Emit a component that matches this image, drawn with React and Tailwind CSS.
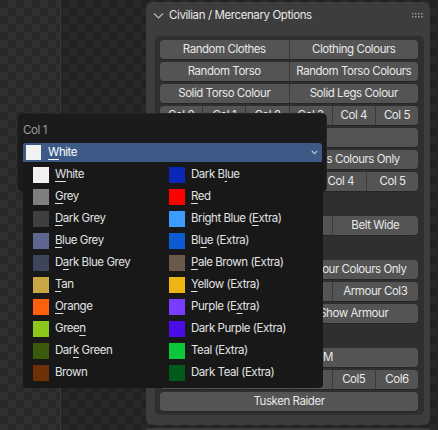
import React from "react";

const F = "font-[Inter,'Noto_Sans',sans-serif]";

const Btn = ({ children }) => (
  <div className="flex-1 min-w-0 flex items-center justify-center bg-[#545454] text-[#e8e8e8] text-[11.5px] tracking-[-0.45px] whitespace-nowrap overflow-hidden">
    {children}
  </div>
);

const Row = ({ items }) => (
  <div className="flex h-[19px] gap-px rounded-[4px] overflow-hidden bg-[#3a3a3a] shadow-[0_1px_0_#262626]">
    {items.map((t, i) => (
      <Btn key={i}>{t}</Btn>
    ))}
  </div>
);

const Label = ({ children }) => (
  <div className="h-[19px] flex items-center text-[11.5px] tracking-[-0.45px] text-[#d0d0d0] pl-1">{children}</div>
);

const left = [
  ["White", "#f2f2f2", 0],
  ["Grey", "#7f7f7f", 0],
  ["Dark Grey", "#3f3f3f", 0],
  ["Blue Grey", "#5e6690", 0],
  ["Dark Blue Grey", "#3c455a", 1],
  ["Tan", "#c9a544", 0],
  ["Orange", "#ff5e0a", 0],
  ["Green", "#8cc81c", 4],
  ["Dark Green", "#3b5a0b", 3],
  ["Brown", "#6e3006", -1],
];
const right = [
  ["Dark Blue", "#0b27b5", 6],
  ["Red", "#ff0000", 0],
  ["Bright Blue (Extra)", "#3d9cff", 13],
  ["Blue (Extra)", "#0b5bd3", 2],
  ["Pale Brown (Extra)", "#6b5a4b", 0],
  ["Yellow (Extra)", "#efb414", 0],
  ["Purple (Extra)", "#7a3dff", 9],
  ["Dark Purple (Extra)", "#4a0be6", -1],
  ["Teal (Extra)", "#0bc73c", -1],
  ["Dark Teal (Extra)", "#015a1a", -1],
];

const Mn = ({ text, idx }) => {
  if (idx < 0) return <span>{text}</span>;
  return (
    <span>
      {text.slice(0, idx)}
      <span className="underline decoration-1 underline-offset-[3px]">{text[idx]}</span>
      {text.slice(idx + 1)}
    </span>
  );
};

const Item = ({ it }) => (
  <div className="h-[22px] flex items-center pl-[10px] gap-[6px]">
    <div className="w-[16px] h-[16px] shrink-0" style={{ backgroundColor: it[1] }} />
    <div className="text-[11.5px] tracking-[-0.45px] text-[#e2e2e2] whitespace-nowrap">
      <Mn text={it[0]} idx={it[2]} />
    </div>
  </div>
);

export default function App() {
  const checkerL =
    "bg-[repeating-conic-gradient(#303030_0_25%,#292929_0_50%)] bg-size-[16px_16px]";
  const checkerR =
    "bg-[repeating-conic-gradient(#282828_0_25%,#212121_0_50%)] bg-size-[16px_16px]";
  return (
    <div className={`relative w-[438px] h-[430px] overflow-hidden flex ${F}`}>
      <div className={`w-[60px] h-full ${checkerL}`} />
      <div className="w-px h-full bg-[#3b3b3b]" />
      <div className={`flex-1 h-full ${checkerR} pl-[85px] pr-[8px] pt-[2px] flex flex-col`}>
        <div className="bg-[#3d3d3d] rounded-[6px] pb-[10px]">
          <div className="h-[27px] flex items-center pl-[7px] pr-[7px]">
            <svg width="11" height="8" viewBox="0 0 11 8" className="mr-[5px]">
              <path d="M1 1.5 L5.5 6 L10 1.5" fill="none" stroke="#b8b8b8" strokeWidth="1.2" />
            </svg>
            <div className="flex-1 text-[11.5px] tracking-[-0.4px] text-[#e8e8e8]">Civilian / Mercenary Options</div>
            <svg width="11" height="6" viewBox="0 0 11 6">
              {[0, 1].map((r) =>
                [0, 1, 2, 3].map((c) => (
                  <rect key={`${r}${c}`} x={c * 3} y={r * 3} width="1.5" height="1.5" fill="#9a9a9a" />
                ))
              )}
            </svg>
          </div>
          <div className="mt-[7px] ml-[9px] mr-[6px] bg-[#2f2f2f] rounded-[5px] pl-[5px] pr-[6px] pt-[4px] pb-[4px] flex flex-col gap-[3px]">
            <Row items={["Random Clothes", "Clothing Colours"]} />
            <Row items={["Random Torso", "Random Torso Colours"]} />
            <Row items={["Solid Torso Colour", "Solid Legs Colour"]} />
            <Row items={["Col 0", "Col 1", "Col 2", "Col 3", "Col 4", "Col 5"]} />
            <Row items={["Random Legs"]} />
            <Row items={["Random Legs Colours", "Legs Colours Only"]} />
            <Row items={["Col 1", "Col 2", "Col 3", "Col 4", "Col 5"]} />
            <Label>Belt</Label>
            <Row items={["Belt Thin", "Belt Medium", "Belt Wide"]} />
            <Label>Armour</Label>
            <Row items={["Random Armour", "Armour Colours Only"]} />
            <Row items={["Armour Col1", "Armour Col2", "Armour Col3"]} />
            <Row items={["Hide Armour", "Show Armour"]} />
            <Label>Tusken</Label>
            <Row items={["Tusken RANDOM"]} />
            <Row items={["Col1", "Col2", "Col3", "Col4", "Col5", "Col6"]} />
            <Row items={["Tusken Raider"]} />
          </div>
        </div>
        <div className="mt-[3px] h-[20px] bg-[#3d3d3d] rounded-t-[6px]" />
      </div>

      {/* popup: label + enum */}
      <div className="absolute left-[17px] top-[113px] w-[310px] h-[79px] bg-[#1b1b1b] rounded-[5px] border border-[#242424]">
        <div className="absolute left-[5px] top-[8px] text-[11.5px] tracking-[-0.4px] text-[#9c9c9c]">Col 1</div>
      </div>
      <div className="absolute left-[23px] top-[143px] w-[299px] h-[19px] bg-[#3d5a87] rounded-t-[3px] flex items-center pl-[3px] pr-[4px]">
        <div className="w-[15px] h-[15px] bg-[#f2f2f2]" />
        <div className="ml-[7px] flex-1 text-[11.5px] tracking-[-0.45px] text-white">
          <Mn text="White" idx={0} />
        </div>
        <svg width="7" height="5" viewBox="0 0 7 5">
          <path d="M0.8 0.8 L3.5 3.8 L6.2 0.8" fill="none" stroke="#d0d0d0" strokeWidth="1.1" />
        </svg>
      </div>
      <div className="absolute left-[23px] top-[162px] w-[300px] h-[226px] bg-[#181818] rounded-b-[4px] pt-[2px]">
        <div className="grid grid-cols-[136px_136px]">
          <div className="flex flex-col">
            {left.map((it, i) => (
              <Item key={i} it={it} />
            ))}
          </div>
          <div className="flex flex-col">
            {right.map((it, i) => (
              <Item key={i} it={it} />
            ))}
          </div>
        </div>
      </div>
    </div>
  );
}
